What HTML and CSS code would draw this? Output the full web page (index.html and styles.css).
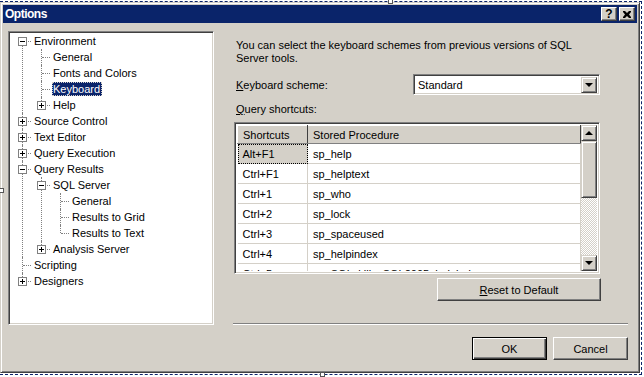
FILE: index.html
```html
<!DOCTYPE html>
<html lang="en">
<head>
<meta charset="UTF-8">
<title>Options</title>
<link rel="stylesheet" href="styles.css">
</head>
<body>

<div class="frame">
<span class="handle handle-top"></span>
<span class="handle handle-left"></span>
<span class="handle handle-bottom"></span>

<div class="window">

<!-- Title bar -->
<div class="titlebar">
<span class="title">Options</span>
<div class="caption-buttons">
<span class="cap-btn">?</span>
<span class="cap-btn">
<svg width="8" height="7" viewBox="0 0 8 7"><path d="M0 0h2l2 2 2-2h2v1L6 3.5 8 6v1H6L4 5 2 7H0V6l2-2.5L0 1z" fill="#000"/></svg>
</span>
</div>
</div>

<div class="main">

<!-- Tree -->
<div class="tree-panel">
<ul class="tree">
<li><span class="toggle minus"></span><div class="row"><span class="node">Environment</span></div>
<ul>
<li><div class="row"><span class="node">General</span></div></li>
<li><div class="row"><span class="node">Fonts and Colors</span></div></li>
<li><div class="row"><span class="node selected">Keyboard</span></div></li>
<li><span class="toggle"></span><div class="row"><span class="node">Help</span></div></li>
</ul>
</li>
<li><span class="toggle"></span><div class="row"><span class="node">Source Control</span></div></li>
<li><span class="toggle"></span><div class="row"><span class="node">Text Editor</span></div></li>
<li><span class="toggle"></span><div class="row"><span class="node">Query Execution</span></div></li>
<li><span class="toggle minus"></span><div class="row"><span class="node">Query Results</span></div>
<ul>
<li><span class="toggle minus"></span><div class="row"><span class="node">SQL Server</span></div>
<ul>
<li><div class="row"><span class="node">General</span></div></li>
<li><div class="row"><span class="node">Results to Grid</span></div></li>
<li><div class="row"><span class="node">Results to Text</span></div></li>
</ul>
</li>
<li><span class="toggle"></span><div class="row"><span class="node">Analysis Server</span></div></li>
</ul>
</li>
<li><div class="row"><span class="node">Scripting</span></div></li>
<li><span class="toggle"></span><div class="row"><span class="node">Designers</span></div></li>
</ul>
</div>

<!-- Keyboard page -->
<div class="pane">
<div class="pane-inner">
<p class="intro">You can select the keyboard schemes from previous versions of SQL<br>Server tools.</p>

<div class="field">
<span><u>K</u>eyboard scheme:</span>
<div class="combo">
<span class="combo-value">Standard</span>
<span class="combo-btn"><span class="arrow-down"></span></span>
</div>
</div>

<div class="label"><u>Q</u>uery shortcuts:</div>

<div class="grid">
<div class="grid-body">
<table>
<thead>
<tr><th class="col-key">Shortcuts</th><th>Stored Procedure</th></tr>
</thead>
<tbody>
<tr><td class="focus">Alt+F1</td><td>sp_help</td></tr>
<tr><td>Ctrl+F1</td><td>sp_helptext</td></tr>
<tr><td>Ctrl+1</td><td>sp_who</td></tr>
<tr><td>Ctrl+2</td><td>sp_lock</td></tr>
<tr><td>Ctrl+3</td><td>sp_spaceused</td></tr>
<tr><td>Ctrl+4</td><td>sp_helpindex</td></tr>
<tr><td>Ctrl+5</td><td>sp_SQLskills_SQL2005_helpindex</td></tr>
</tbody>
</table>
</div>
<div class="scrollbar">
<span class="sb-btn"><span class="arrow-up"></span></span>
<span class="sb-thumb"></span>
<span class="sb-track"></span>
<span class="sb-btn"><span class="arrow-down"></span></span>
</div>
</div>

<button class="btn reset"><u>R</u>eset to Default</button>
</div>
<div class="separator"></div>
</div>

</div>

<div class="actions">
<button class="btn default">OK</button>
<button class="btn">Cancel</button>
</div>

</div>
</div>

</body>
</html>
```

FILE: styles.css
```css
body{
    margin:0;
    background:#fff;
    font-family:"Liberation Sans", Arial, sans-serif;
    font-size:11px;
    color:#000;
    width:644px;
    height:377px;
    overflow:hidden;
}

.frame{
    position:relative;
    margin-top:1px;
    width:641px;
    height:372px;
    border-top:1px dashed #0a246a;
    border-right:1px dashed #0a246a;
    border-bottom:1px dashed #0a246a;
}

.handle{
    position:absolute;
    width:3px;
    height:3px;
    background:#fff;
    border:1px solid #555;
}
.handle-top{ left:388px; top:-3px; }
.handle-bottom{ left:320px; bottom:-3px; }
.handle-left{ left:-1px; top:186px; }

.window{
    background:#d4d0c8;
    border:1px solid;
    border-color:#d4d0c8 #404040 #404040 #d4d0c8;
    box-shadow:inset 1px 1px #fff, inset -1px -1px #808080;
    padding:2px;
    box-sizing:border-box;
    width:640px;
    height:371px;
    display:flex;
    flex-direction:column;
}

.titlebar{
    height:18px;
    background:#0a246a;
    display:flex;
    align-items:center;
    justify-content:space-between;
    padding:0 2px 0 2px;
}

.title{
    color:#fff;
    font-weight:bold;
    font-size:12px;
    letter-spacing:-0.5px;
}

.caption-buttons{
    display:flex;
    gap:2px;
}

.cap-btn{
    width:16px;
    height:14px;
    box-sizing:border-box;
    background:#d4d0c8;
    border:1px solid;
    border-color:#fff #404040 #404040 #fff;
    box-shadow:inset -1px -1px #808080;
    display:flex;
    align-items:center;
    justify-content:center;
    font-weight:bold;
    font-size:12px;
    line-height:12px;
}

.main{
    display:flex;
    gap:19px;
    padding:8px 9px 0 5px;
}

/* tree */
.tree-panel{
    width:206px;
    height:294px;
    box-sizing:border-box;
    background:#fff;
    border:1px solid;
    border-color:#808080 #fff #fff #808080;
    box-shadow:inset 1px 1px #404040, inset -1px -1px #d4d0c8;
    padding:1px;
}

.tree, .tree ul{
    list-style:none;
    margin:0;
    padding:0;
}

.tree ul{
    margin-left:-4px;
}

.tree li{
    position:relative;
    padding-left:23px;
}

.tree li::before{
    content:'';
    position:absolute;
    left:12px;
    top:0;
    bottom:0;
    border-left:1px dotted #808080;
}

.tree li:last-child::before{
    bottom:auto;
    height:8px;
}

.tree > li:first-child::before{
    top:8px;
    height:auto;
}

.tree li::after{
    content:'';
    position:absolute;
    left:13px;
    top:8px;
    width:8px;
    border-top:1px dotted #808080;
}

.row{
    display:flex;
    align-items:center;
    height:16px;
}

.node{
    height:14px;
    line-height:14px;
    padding:0 2px 0 1px;
    white-space:nowrap;
}

.node.selected{
    background:#0a246a;
    color:#fff;
    outline:1px dotted #d4d0c8;
    outline-offset:-1px;
}

.toggle{
    position:absolute;
    z-index:1;
    left:8px;
    top:4px;
    width:9px;
    height:9px;
    box-sizing:border-box;
    border:1px solid #808080;
    background:#fff;
}

.toggle::before, .toggle::after{
    content:'';
    position:absolute;
    background:#000;
}

.toggle::before{
    left:1px;
    top:3px;
    width:5px;
    height:1px;
}

.toggle::after{
    left:3px;
    top:1px;
    width:1px;
    height:5px;
}

.toggle.minus::after{
    display:none;
}

/* right pane */
.pane{
    width:395px;
    height:294px;
    display:flex;
    flex-direction:column;
}

.pane-inner{
    width:367px;
    display:flex;
    flex-direction:column;
}

.intro{
    margin:8px 0 0 3px;
    line-height:13px;
}

.field{
    display:flex;
    align-items:center;
    justify-content:space-between;
    margin-top:9px;
    padding-left:3px;
}

.combo{
    width:187px;
    height:21px;
    box-sizing:border-box;
    background:#fff;
    border:1px solid;
    border-color:#808080 #fff #fff #808080;
    box-shadow:inset 1px 1px #404040, inset -1px -1px #d4d0c8;
    padding:2px;
    display:flex;
    align-items:center;
    justify-content:space-between;
}

.combo-value{
    padding-left:2px;
}

.combo-btn, .sb-btn{
    width:16px;
    height:16px;
    box-sizing:border-box;
    background:#d4d0c8;
    border:1px solid;
    border-color:#d4d0c8 #404040 #404040 #d4d0c8;
    box-shadow:inset 1px 1px #fff, inset -1px -1px #808080;
    display:flex;
    align-items:center;
    justify-content:center;
}

.arrow-down{
    border-left:4px solid transparent;
    border-right:4px solid transparent;
    border-top:4px solid #000;
}

.arrow-up{
    border-left:4px solid transparent;
    border-right:4px solid transparent;
    border-bottom:4px solid #000;
}

.label{
    margin:8px 0 0 3px;
    line-height:13px;
}

.grid{
    margin:6px 0 0 1px;
    width:366px;
    height:152px;
    box-sizing:border-box;
    border:1px solid;
    border-color:#808080 #fff #fff #808080;
    box-shadow:inset 1px 1px #404040, inset -1px -1px #d4d0c8;
    padding:2px;
    display:flex;
    background:#fff;
}

.grid-body{
    flex:1;
    overflow:hidden;
}

table{
    border-collapse:collapse;
    table-layout:fixed;
    width:100%;
    font-size:11px;
}

th{
    height:18px;
    padding:0 0 0 5px;
    text-align:left;
    font-weight:normal;
    background:#d4d0c8;
    box-sizing:border-box;
    border:1px solid;
    border-color:#fff #404040 #808080 #fff;
}

th.col-key{
    width:70px;
}

td{
    height:20px;
    box-sizing:border-box;
    padding:0 0 0 5px;
    border-bottom:1px solid #d4d0c8;
    border-right:1px solid #d4d0c8;
    white-space:nowrap;
}

td.focus{
    background:#d4d0c8;
    outline:1px dotted #000;
    outline-offset:-1px;
}

.scrollbar{
    width:16px;
    display:flex;
    flex-direction:column;
}

.sb-thumb{
    height:57px;
    box-sizing:border-box;
    background:#d4d0c8;
    border:1px solid;
    border-color:#d4d0c8 #404040 #404040 #d4d0c8;
    box-shadow:inset 1px 1px #fff, inset -1px -1px #808080;
}

.sb-track{
    flex:1;
    background:repeating-conic-gradient(#fff 0 25%, #d4d0c8 0 50%) 0 0/2px 2px;
}

.btn{
    font-family:"Liberation Sans", Arial, sans-serif;
    font-size:11px;
    color:#000;
    background:#d4d0c8;
    border:1px solid;
    border-color:#fff #404040 #404040 #fff;
    box-shadow:inset -1px -1px #808080;
    height:23px;
    padding:0;
    cursor:pointer;
}

.reset{
    align-self:flex-end;
    width:164px;
    margin-top:4px;
    margin-right:-1px;
}

.separator{
    margin-top:auto;
    border-top:1px solid #808080;
    border-bottom:1px solid #fff;
}

.actions{
    display:flex;
    justify-content:flex-end;
    gap:6px;
    padding:12px 9px 0 0;
}

.actions .btn{
    width:75px;
}

.btn.default{
    border:1px solid #000;
    box-shadow:inset 1px 1px #fff, inset -1px -1px #404040, inset -2px -2px #808080;
}
```
